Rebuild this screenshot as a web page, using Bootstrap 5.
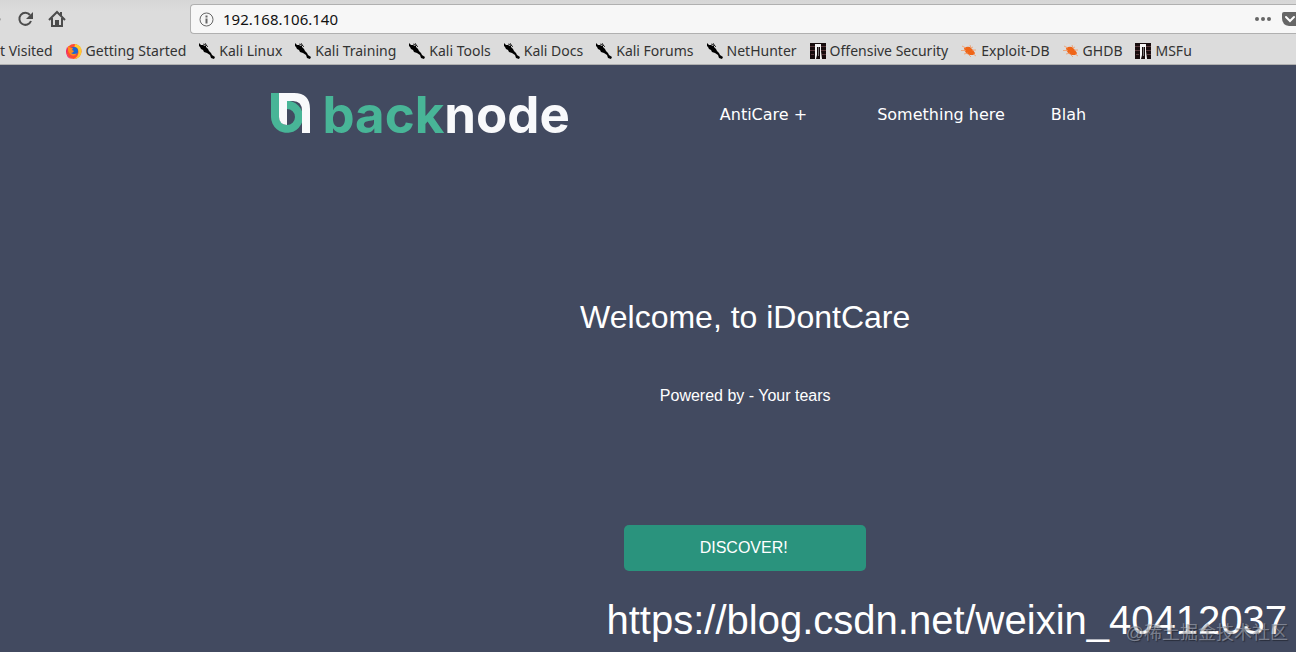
<!DOCTYPE html>
<html lang="en">
<head>
<meta charset="utf-8">
<meta name="viewport" content="width=device-width, initial-scale=1">
<title>iDontCare</title>
<link rel="stylesheet" href="https://cdn.jsdelivr.net/npm/bootstrap@5.3.0/dist/css/bootstrap.min.css">
<style>
:root { --slate: #424a60; --mint: #48b597; --chrome: #dcdcdc; }
body { background: var(--slate); color: #fff; font-family: "Liberation Sans", Arial, sans-serif; font-size: 16px; line-height: 24px; overflow-x: hidden; }
.browser { background: linear-gradient(#d6d6d6, var(--chrome) 12px); border-bottom: 1px solid #b0b0b0; height: 65px; color: #333; font-family: "Noto Sans", sans-serif; font-size: 14px; line-height: 20px; overflow: hidden; }
.toolbar { padding-top: 4px; }
.tools { width: 190px; height: 30px; gap: 14px; }
.tool { height: 18px; padding: 0; border: 0; background: none; color: #4c4c4c; display: block; line-height: 0; flex-shrink: 0; }
.address { height: 30px; background: #f7f7f7; border: 1px solid #b0b0b0; border-right: 0; border-radius: 4px 0 0 4px; padding-left: 8px; gap: 9px; color: #666; }
.address input { border: 0; background: none; color: #111; padding: 0; font-size: 15px; outline: 0; min-width: 0; }
.bookmarks { gap: 13px; height: 30px; padding-top: 4px; white-space: nowrap; }
.bookmarks a { color: #333; gap: 4px; text-decoration: none; }
.bookmarks svg { width: 16px; height: 16px; flex-shrink: 0; }
.site { margin-left: 15%; }
.site-head { padding: 28px 0 0 77px; }
.brand { gap: 10px; text-decoration: none; height: 40px; }
.wordmark { font-family: Inter, sans-serif; font-weight: 700; font-size: 51px; line-height: 44px; color: #f8f9fb; }
.wordmark b { color: var(--mint); font-weight: 700; }
.menu { margin-left: 150px; padding-top: 10px; gap: 46px; font-family: "DejaVu Sans", sans-serif; white-space: nowrap; }
.menu a { color: #fff; text-decoration: none; }
.hero { padding-top: 164px; }
.hero h1 { font-size: 32px; line-height: 40px; font-weight: 400; margin-bottom: 47px; }
.hero p { margin-bottom: 117px; }
.discover { width: 242px; height: 46px; background: #2a937d; border: 0; border-radius: 5px; color: #fff; padding: 0 3px 0 0; }
.marks { padding: 25px 9px 0 0; }
.stamp { font-size: 40px; line-height: 48px; }
.credit { right: 8px; bottom: -1px; font-family: "Liberation Sans", "Noto Sans CJK SC", sans-serif; font-size: 18px; line-height: 24px; color: #a9adb899; text-shadow: 1px 1px 1px #0006; }
</style>
<script src="https://cdn.jsdelivr.net/npm/bootstrap@5.3.0/dist/js/bootstrap.bundle.min.js"></script>
</head>
<body>
<svg class="position-absolute" width="0" height="0" aria-hidden="true">
  <symbol id="kali" viewBox="0 0 16 16"><path d="M0 0l2 2 2 0 2 1 1-1 0 2 1 1 1 1 1 2 2 2 1 2 3 2-1 2-3-1-1-3-3-2-3-1-1-2-2-1-1-2-1-1z"/><path fill="none" stroke="#000" stroke-width=".7" d="M4 1l3 1 2 2M6 0l2 3"/></symbol>
  <symbol id="offsec" viewBox="0 0 16 16"><path fill="#170c0d" d="M0 0h16v16H0z"/><path stroke="#5a3a3d" d="M0 3.500h5m6 0h5M0 7.500h5m6 0h5M1 11.500h3m8 0h4"/><path fill="#f5f5f5" d="M5 1h6v7l1 8h-2V4H7v8l-1 4H5V8z"/><path fill="#777" d="M8 4h1v9H8z"/></symbol>
  <symbol id="bug" viewBox="0 0 16 16"><path fill="#ef6518" d="M3 5q3-2 6-1l3 3 2 3-1 2-4 0q-5-1-6-7z"/><path fill="none" stroke="#f09a68" stroke-width=".8" d="M1 3l4 2M0 7.500l5 0M3 11l4-1M9 2l1 3 2-1M11 7l4 0M12 11l3 2M8 12l2 2"/></symbol>
</svg>
<header class="browser">
  <div class="toolbar d-flex">
    <div class="tools d-flex align-items-center flex-shrink-0">
      <button class="tool" aria-label="Forward"><svg width="2" height="18"><path fill="#999" d="M0 8l1 1-1 2z"/></svg></button>
      <button class="tool" aria-label="Reload"><svg width="18" height="18" fill="none" stroke="currentColor" stroke-width="2"><path d="M14 5A6 6 0 1 0 15 11"/><path fill="currentColor" stroke="none" d="M17 2v7h-7z"/></svg></button>
      <button class="tool" aria-label="Home"><svg width="18" height="18" fill="none" stroke="currentColor" stroke-width="2"><path d="M1 10l8-8 8 8M4 8v8h10V8"/><path fill="currentColor" stroke="none" d="M7 10h4v6H7zM12 2h2v4h-2z"/></svg></button>
    </div>
    <div class="address d-flex align-items-center flex-grow-1">
      <svg width="15" height="15" fill="none" stroke="currentColor"><circle cx="7.500" cy="7.500" r="6.500"/><path stroke-width="2" d="M7.500 6.500v5M7.500 3.500v2"/></svg>
      <input class="flex-grow-1" aria-label="Address" value="192.168.106.140">
      <button class="tool" aria-label="Page actions"><svg width="18" height="18" fill="#666"><circle cx="3" cy="9" r="2"/><circle cx="9" cy="9" r="2"/><circle cx="15" cy="9" r="2"/></svg></button>
      <button class="tool" aria-label="Save to Pocket"><svg width="15" height="18"><path fill="#666" d="M3 2h12v14H8Q1 15 1 8V4q0-2 2-2z"/><path fill="none" stroke="#fff" stroke-width="2" stroke-linecap="round" d="M5 7l4 4 4-4"/></svg></button>
    </div>
  </div>
  <nav class="bookmarks d-flex align-items-center" aria-label="Bookmarks">
    <a href="#">t Visited</a>
    <a href="#" class="d-flex align-items-center"><svg viewBox="0 0 16 16"><circle cx="8" cy="8.500" r="7.500" fill="#ff4b32"/><path fill="#ffcb2e" d="M9 1q7 1 6.500 8-1 7-8 7 5-2 5-7 0-4-4-5z"/><path fill="#f0246a" d="M1 4l1 1-1 5q1 4 5 6-6-1-6-8z"/><circle cx="8" cy="8" r="4" fill="#1d66d2"/><path fill="#ff8a1d" d="M2 3l3 2 2 0-1 2 2 1q-1 2-3 2 3 2 6 0-2 4-6 2-4-3-3-9z"/></svg>Getting Started</a>
    <a href="#" class="d-flex align-items-center"><svg><use href="#kali"/></svg>Kali Linux</a>
    <a href="#" class="d-flex align-items-center"><svg><use href="#kali"/></svg>Kali Training</a>
    <a href="#" class="d-flex align-items-center"><svg><use href="#kali"/></svg>Kali Tools</a>
    <a href="#" class="d-flex align-items-center"><svg><use href="#kali"/></svg>Kali Docs</a>
    <a href="#" class="d-flex align-items-center"><svg><use href="#kali"/></svg>Kali Forums</a>
    <a href="#" class="d-flex align-items-center"><svg><use href="#kali"/></svg>NetHunter</a>
    <a href="#" class="d-flex align-items-center"><svg><use href="#offsec"/></svg>Offensive Security</a>
    <a href="#" class="d-flex align-items-center"><svg><use href="#bug"/></svg>Exploit-DB</a>
    <a href="#" class="d-flex align-items-center"><svg><use href="#bug"/></svg>GHDB</a>
    <a href="#" class="d-flex align-items-center"><svg><use href="#offsec"/></svg>MSFu</a>
  </nav>
</header>
<div class="site">
  <div class="site-head d-flex">
    <a href="#" class="brand d-flex">
      <svg width="41" height="40" aria-hidden="true"><path fill="#48b597" fill-rule="evenodd" d="M0 0h8v10a16 16 0 1 1-8 14zM16 16a8 8 0 1 0 0 16a8 8 0 0 0 0-16z"/><path fill="#f8f9fb" d="M8 0h15q16 0 16 16v24h-8V18q0-10-9-10h-6v24q-8-1-8-8z"/></svg>
      <span class="wordmark"><b>back</b>node</span>
    </a>
    <nav class="menu d-flex" aria-label="Main"><a href="#" class="me-4">AntiCare +</a><a href="#">Something here</a><a href="#">Blah</a></nav>
  </div>
  <main class="hero text-center">
    <h1>Welcome, to iDontCare</h1>
    <p>Powered by - Your tears</p>
    <button class="discover">DISCOVER!</button>
  </main>
</div>
<footer class="marks text-end position-relative">
  <div class="stamp">https://blog.csdn.net/weixin_40412037</div>
  <div class="credit position-absolute">@稀土掘金技术社区</div>
</footer>
</body>
</html>
